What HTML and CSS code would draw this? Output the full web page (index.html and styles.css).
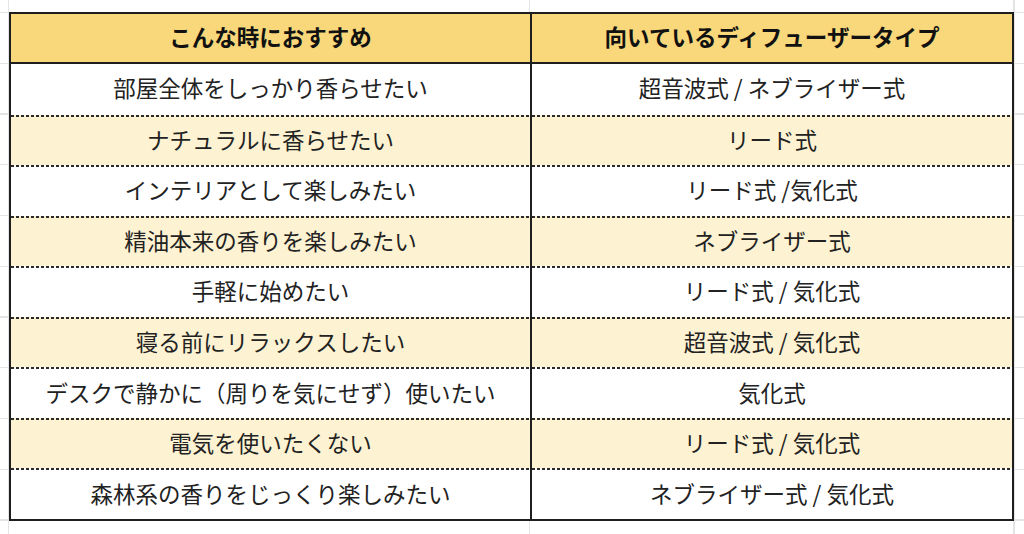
FILE: index.html
```html
<!DOCTYPE html>
<html lang="ja">
<head>
<meta charset="utf-8">
<title>ディフューザータイプ</title>
<link rel="stylesheet" href="styles.css">
</head>
<body>
<div class="sheet">
  <div class="table">
    <div class="cell head">こんな時におすすめ</div>
    <div class="cell head right">向いているディフューザータイプ</div>

    <div class="cell">部屋全体をしっかり香らせたい</div>
    <div class="cell right">超音波式 / ネブライザー式</div>

    <div class="cell alt dash">ナチュラルに香らせたい</div>
    <div class="cell alt dash right">リード式</div>

    <div class="cell dash">インテリアとして楽しみたい</div>
    <div class="cell dash right">リード式 /気化式</div>

    <div class="cell alt dash">精油本来の香りを楽しみたい</div>
    <div class="cell alt dash right">ネブライザー式</div>

    <div class="cell dash">手軽に始めたい</div>
    <div class="cell dash right">リード式 / 気化式</div>

    <div class="cell alt dash">寝る前にリラックスしたい</div>
    <div class="cell alt dash right">超音波式 / 気化式</div>

    <div class="cell dash">デスクで静かに（周りを気にせず）使いたい</div>
    <div class="cell dash right">気化式</div>

    <div class="cell alt dash">電気を使いたくない</div>
    <div class="cell alt dash right">リード式 / 気化式</div>

    <div class="cell dash">森林系の香りをじっくり楽しみたい</div>
    <div class="cell dash right">ネブライザー式 / 気化式</div>
  </div>
</div>
</body>
</html>
```

FILE: styles.css
```css
html, body {
  margin: 0;
  padding: 0;
}

body {
  width: 1024px;
  height: 534px;
  overflow: hidden;
  background-color: #ffffff;
  background-image:
    linear-gradient(#e4e4e4, #e4e4e4),
    linear-gradient(#e4e4e4, #e4e4e4),
    linear-gradient(#e4e4e4, #e4e4e4),
    repeating-linear-gradient(180deg, #e4e4e4 0, #e4e4e4 1px, transparent 1px, transparent 50.75px);
  background-repeat: no-repeat, no-repeat, no-repeat, repeat;
  background-size: 1px 100%, 1px 100%, 2px 100%, auto;
  background-position: 8px 0, 529px 0, 1013px 0, 0 12px;
  font-family: "Noto Sans CJK JP", "Noto Sans", sans-serif;
}

.sheet {
  padding: 12px 0 0 9px;
}

.table {
  box-sizing: border-box;
  width: 1005px;
  height: 509px;
  border: 2px solid #1e1e1e;
  display: grid;
  grid-template-columns: 519px 1fr;
  grid-template-rows: 50px repeat(9, 1fr);
  background: #ffffff;
}

.cell {
  box-sizing: border-box;
  display: flex;
  align-items: center;
  justify-content: center;
  font-size: 22.5px;
  color: #222222;
  background-color: #ffffff;
  background-repeat: repeat-x;
  background-position: 0 0;
  padding-bottom: 4px;
}

.right {
  border-left: 2px solid #1e1e1e;
}

.head {
  background-color: #f8d87a;
  font-weight: 700;
  color: #111111;
  border-bottom: 2px solid #1e1e1e;
  padding-bottom: 4px;
}

.alt {
  background-color: #fdf2d2;
}

.dash {
  background-image: linear-gradient(90deg, #2a2a2a 0, #2a2a2a 3px, transparent 3px, transparent 5px);
  background-size: 5px 2px;
  padding-top: 2px;
}
```
